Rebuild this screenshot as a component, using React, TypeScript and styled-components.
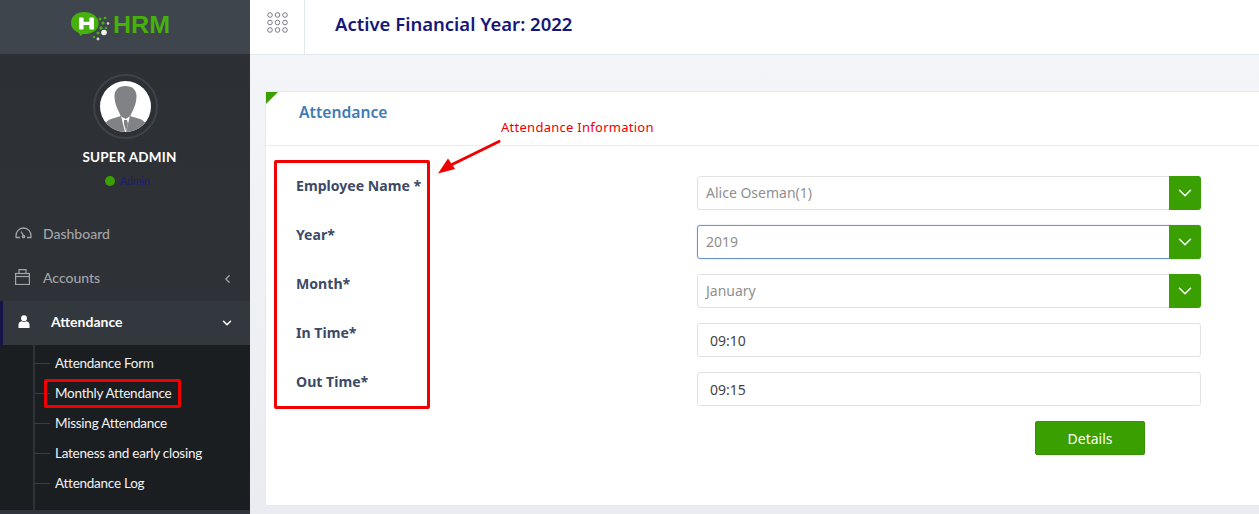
import * as React from "react";
import styled, { createGlobalStyle } from "styled-components";
import { ChevronDown, ChevronLeft } from "lucide-react";

const GlobalStyle = createGlobalStyle`
    html, body {
        margin: 0;
        padding: 0;
        height: 514px;
        overflow: hidden;
        background: #f0f2f7;
        font-family: "Noto Sans", "Open Sans", sans-serif;
    }
`;

const subItems = [
    "Attendance Form",
    "Monthly Attendance",
    "Missing Attendance",
    "Lateness and early closing",
    "Attendance Log",
];

const fields = [
    { label: "Employee Name *", value: "Alice Oseman(1)", select: true },
    { label: "Year*", value: "2019", select: true, focused: true },
    { label: "Month*", value: "January", select: true },
    { label: "In Time*", value: "09:10", select: false },
    { label: "Out Time*", value: "09:15", select: false },
];

const Logo = () => (
    <svg width="102" height="32" viewBox="0 0 102 32">
        <path d="M13 1c7 0 12 3 14 8 2 6-1 11-7 13-3 1-6 1-8 1l-3 2c0-2-1-3-3-4C2 19 0 16 0 12 0 5 6 1 13 1z" fill="#46b00c" />
        <rect x="8" y="6.5" width="4.6" height="12" rx="1" fill="#fff" />
        <rect x="18.4" y="6.5" width="4.6" height="12" rx="1" fill="#fff" />
        <rect x="11" y="10.8" width="9" height="3.2" fill="#fff" />
        <circle cx="29" cy="8" r="1.4" fill="#46b00c" />
        <circle cx="34" cy="7" r="1.3" fill="#46b00c" />
        <circle cx="32" cy="12" r="1.6" fill="#46b00c" />
        <circle cx="37" cy="12.5" r="1.3" fill="#d8d8d8" />
        <circle cx="30" cy="17" r="1.7" fill="#46b00c" />
        <circle cx="35" cy="17" r="1.2" fill="#46b00c" />
        <circle cx="33" cy="21.5" r="2.8" fill="#f2f2f2" />
        <circle cx="27" cy="22" r="1.5" fill="#46b00c" />
        <circle cx="23" cy="26" r="1.2" fill="#46b00c" />
        <circle cx="27" cy="28" r="1.4" fill="#d8d8d8" />
        <text x="42" y="22" fontFamily="Liberation Sans, sans-serif" fontWeight="700" fontSize="23" fill="#46b00c" textLength="57" lengthAdjust="spacingAndGlyphs">HRM</text>
    </svg>
);

const Silhouette = () => (
    <svg width="51" height="51" viewBox="0 0 51 51">
        <circle cx="25.5" cy="25.5" r="25.5" fill="#fff" />
        <clipPath id="avatar-clip"><circle cx="25.5" cy="25.5" r="25.5" /></clipPath>
        <g clipPath="url(#avatar-clip)">
            <path d="M25.5 5c7 0 11 4 11 10 0 4-1 9-3 13-1 3-3 5-3 7l-5 3-5-3c0-2-2-4-3-7-2-4-3-9-3-13 0-6 4-10 11-10z" fill="#808285" />
            <path d="M3 51c1-8 3-11 8-13l10-3 4 16H3zM48 51c-1-8-3-11-8-13l-10-3-4 16h22z" fill="#808285" />
            <path d="M24 39h3l1 4-2 7-2-7z" fill="#808285" />
        </g>
    </svg>
);

const DashboardIcon = () => (
    <svg width="17" height="12" viewBox="0 0 17 12" fill="none" stroke="#a3a5a8" strokeWidth="1.3">
        <path d="M5 10.5H1.2C.2 5 4 1 8.5 1S16.8 5 15.8 10.5H12" />
        <path d="M9 9.5L6 4.5" />
        <circle cx="8.5" cy="9.5" r="1.2" />
    </svg>
);

const AccountsIcon = () => (
    <svg width="15" height="16" viewBox="0 0 15 16" fill="none" stroke="#a3a5a8" strokeWidth="1.2">
        <rect x=".6" y="4.5" width="13.8" height="11" />
        <path d="M.6 7.5H14.4" />
        <path d="M4 4.5V.6H11V4.5" />
    </svg>
);

const UserIcon = () => (
    <svg width="12" height="13" viewBox="0 0 12 13">
        <circle cx="6" cy="3.2" r="3" fill="#fff" />
        <path d="M0.5 13V9.8C0.5 7.8 2 6.6 3.6 6.3c1.4 1 3.4 1 4.8 0 1.6.3 3.1 1.5 3.1 3.5V13z" fill="#fff" />
    </svg>
);

const App: React.FC = () => {
    return (
        <Page>
            <GlobalStyle />
            <Sidebar>
                <LogoBar><Logo /></LogoBar>
                <Profile>
                    <AvatarRing><Silhouette /></AvatarRing>
                    <UserName>SUPER ADMIN</UserName>
                    <UserRole><Dot />Admin</UserRole>
                </Profile>
                <Menu>
                    <MenuItem>
                        <MenuIcon><DashboardIcon /></MenuIcon>
                        Dashboard
                    </MenuItem>
                    <MenuItem>
                        <MenuIcon><AccountsIcon /></MenuIcon>
                        Accounts
                        <Caret><ChevronLeft size={13} strokeWidth={2.4} /></Caret>
                    </MenuItem>
                    <ActiveItem>
                        <UserIcon />
                        <ActiveLabel>Attendance</ActiveLabel>
                        <Caret><ChevronDown size={14} strokeWidth={2.6} /></Caret>
                    </ActiveItem>
                    <SubMenu>
                        {subItems.map((item) => (
                            <SubItem key={item}>{item}</SubItem>
                        ))}
                        <Highlight />
                    </SubMenu>
                </Menu>
            </Sidebar>
            <Main>
                <TopBar>
                    <GridButton>
                        <svg width="21" height="21" viewBox="0 0 21 21" fill="none" stroke="#7a7a88" strokeWidth="1">
                            {[3, 10.5, 18].map((y) =>
                                [3, 10.5, 18].map((x) => (
                                    <circle key={`${x}-${y}`} cx={x} cy={y} r="2.3" />
                                ))
                            )}
                        </svg>
                    </GridButton>
                    <YearTitle>Active Financial Year: 2022</YearTitle>
                </TopBar>
                <Content>
                    <Card>
                        <CardHeader>Attendance</CardHeader>
                        <CardBody>
                            <Labels>
                                {fields.map((f) => (
                                    <Label key={f.label}>{f.label}</Label>
                                ))}
                            </Labels>
                            <Controls>
                                {fields.map((f) => (
                                    <Control key={f.label} $focused={!!f.focused}>
                                        <Value $muted={f.select}>{f.value}</Value>
                                        {f.select && (
                                            <SelectArrow>
                                                <ChevronDown size={22} strokeWidth={1.6} />
                                            </SelectArrow>
                                        )}
                                    </Control>
                                ))}
                                <ButtonRow>
                                    <DetailsButton>Details</DetailsButton>
                                </ButtonRow>
                            </Controls>
                        </CardBody>
                    </Card>
                </Content>
            </Main>
            <NoteBox />
            <NoteText>Attendance Information</NoteText>
            <NoteArrow width="64" height="36" viewBox="0 0 64 36">
                <path d="M61 1.5L12 25.5" stroke="#f00000" strokeWidth="3" strokeLinecap="round" />
                <path d="M0 33.5L10 18.5L17 29z" fill="#f00000" />
            </NoteArrow>
        </Page>
    );
};

export default App;

const Page = styled.div`
    position: relative;
    display: flex;
    width: 1259px;
    height: 514px;
    overflow: hidden;
`;

const Sidebar = styled.aside`
    width: 250px;
    flex: none;
    background: linear-gradient(180deg, #2c2f33 0%, #30343a 100%);
    font-family: "Lato", "Noto Sans", sans-serif;
`;

const LogoBar = styled.div`
    height: 54px;
    background: #3f454d;
    display: flex;
    align-items: center;
    justify-content: center;
    padding-right: 6px;
    box-sizing: border-box;
`;

const Profile = styled.div`
    display: flex;
    flex-direction: column;
    align-items: center;
    padding-top: 20px;
    height: 159px;
    box-sizing: border-box;
`;

const AvatarRing = styled.div`
    width: 65px;
    height: 65px;
    box-sizing: border-box;
    border: 2px solid #3f4349;
    border-radius: 50%;
    display: flex;
    align-items: center;
    justify-content: center;
`;

const UserName = styled.div`
    margin-top: 9px;
    padding-left: 9px;
    color: #fff;
    font-size: 13.5px;
    line-height: 18px;
    font-weight: 700;
    letter-spacing: 0.2px;
`;

const UserRole = styled.div`
    margin-top: 7px;
    padding-left: 5px;
    display: flex;
    align-items: center;
    gap: 5px;
    color: #1d1d6e;
    font-size: 10.5px;
    line-height: 16px;
`;

const Dot = styled.span`
    width: 10px;
    height: 10px;
    border-radius: 50%;
    background: #3a9f00;
`;

const Menu = styled.nav`
    display: flex;
    flex-direction: column;
`;

const MenuItem = styled.div`
    position: relative;
    display: flex;
    align-items: center;
    height: 44px;
    box-sizing: border-box;
    padding: 0 0 4px 15px;
    color: #a3a5a8;
    font-size: 14px;
    font-weight: 500;
`;

const MenuIcon = styled.span`
    display: flex;
    width: 28px;
`;

const Caret = styled.span`
    position: absolute;
    right: 16px;
    top: 50%;
    transform: translateY(-50%);
    display: flex;
`;

const ActiveItem = styled.div`
    position: relative;
    display: flex;
    align-items: center;
    height: 44px;
    box-sizing: border-box;
    padding: 0 0 4px 15px;
    background: #33373e;
    border-left: 3px solid #15154a;
    color: #fff;
    font-size: 14px;
    font-weight: 700;
`;

const ActiveLabel = styled.span`
    margin-left: 21px;
`;

const SubMenu = styled.div`
    position: relative;
    height: 165px;
    padding-top: 3px;
    box-sizing: border-box;
    background: #1b1e21;
    &::before {
        content: "";
        position: absolute;
        left: 33px;
        top: 0;
        bottom: 0;
        width: 2px;
        background: #2e3136;
    }
`;

const SubItem = styled.div`
    position: relative;
    height: 30px;
    line-height: 30px;
    padding-left: 55px;
    color: #f2f2f2;
    font-size: 13.5px;
    letter-spacing: -0.25px;
    &::before {
        content: "";
        position: absolute;
        left: 35px;
        top: 15px;
        width: 15px;
        height: 1px;
        background: #3a3d42;
    }
`;

const Highlight = styled.div`
    position: absolute;
    left: 44px;
    top: 34px;
    width: 137px;
    height: 29px;
    box-sizing: border-box;
    border: 3px solid #f00000;
    border-radius: 2px;
`;

const Main = styled.main`
    flex: 1;
    display: flex;
    flex-direction: column;
    min-width: 0;
`;

const TopBar = styled.header`
    height: 55px;
    flex: none;
    box-sizing: border-box;
    display: flex;
    align-items: center;
    background: #fff;
    border-bottom: 1px solid #e3e8ee;
`;

const GridButton = styled.div`
    width: 55px;
    height: 54px;
    box-sizing: border-box;
    border-right: 1px solid #e3e8ee;
    display: flex;
    justify-content: center;
    padding-top: 12px;
`;

const YearTitle = styled.h1`
    margin: 0 0 0 30px;
    color: #17177a;
    font-size: 18.5px;
    font-weight: 600;
    line-height: 24px;
    position: relative;
    top: -3px;
`;

const Content = styled.div`
    flex: 1;
    padding: 36px 0 8px 15px;
    display: flex;
    background: linear-gradient(180deg, #f4f5f8 0%, #ebecf2 100%);
`;

const Card = styled.section`
    position: relative;
    flex: 1;
    background: #fff;
    border: 1px solid #e6e9ef;
    border-right: 0;
    &::before {
        content: "";
        position: absolute;
        left: 0;
        top: 0;
        border-top: 12px solid #3a9f00;
        border-right: 12px solid transparent;
    }
`;

const CardHeader = styled.div`
    height: 54px;
    box-sizing: border-box;
    padding: 7px 0 0 33px;
    line-height: 26px;
    color: #3f7cb5;
    font-size: 15.7px;
    font-weight: 600;
    border-bottom: 1px solid #eaedf1;
`;

const CardBody = styled.div`
    display: flex;
    padding-top: 30px;
`;

const Labels = styled.div`
    width: 431px;
    flex: none;
    padding-left: 30px;
    box-sizing: border-box;
`;

const Label = styled.div`
    height: 49px;
    margin-top: -7px;
    margin-bottom: 7px;
    line-height: 34px;
    color: #3c4a66;
    font-size: 14.1px;
    font-weight: 700;
`;

const Controls = styled.div`
    width: 504px;
    flex: none;
    display: flex;
    flex-direction: column;
    gap: 15px;
`;

const Control = styled.div<{ $focused: boolean }>`
    position: relative;
    height: 34px;
    box-sizing: border-box;
    display: flex;
    align-items: center;
    background: #fff;
    border: 1px solid ${(props) => (props.$focused ? "#6f93cf" : "#e2e2e2")};
    border-radius: 3px;
    box-shadow: ${(props) => (props.$focused ? "0 0 2px #c9d8f0" : "none")};
`;

const Value = styled.span<{ $muted: boolean }>`
    padding-left: ${(props) => (props.$muted ? "8px" : "12px")};
    padding-bottom: ${(props) => (props.$muted ? "2px" : "0")};
    color: ${(props) => (props.$muted ? "#8f8f8f" : "#444")};
    font-size: 14px;
`;

const SelectArrow = styled.span`
    position: absolute;
    top: -1px;
    right: -1px;
    bottom: -1px;
    width: 32px;
    display: flex;
    align-items: center;
    justify-content: center;
    color: #fff;
    background: #3a9f00;
    border-radius: 0 3px 3px 0;
`;

const ButtonRow = styled.div`
    display: flex;
    justify-content: flex-end;
    padding-right: 56px;
`;

const DetailsButton = styled.button`
    width: 110px;
    height: 34px;
    border: 1px solid #359300;
    border-radius: 2px;
    background: #3a9f00;
    color: #fff;
    font-family: "Noto Sans", sans-serif;
    font-size: 14px;
`;

const NoteBox = styled.div`
    position: absolute;
    left: 274px;
    top: 160px;
    width: 156px;
    height: 249px;
    box-sizing: border-box;
    border: 3px solid #f00000;
    border-radius: 2px;
`;

const NoteText = styled.div`
    position: absolute;
    left: 501px;
    top: 118px;
    color: #f00000;
    font-family: "Noto Sans", sans-serif;
    font-size: 13px;
    letter-spacing: 0.27px;
    line-height: 18px;
`;

const NoteArrow = styled.svg`
    position: absolute;
    left: 438px;
    top: 140px;
`;
